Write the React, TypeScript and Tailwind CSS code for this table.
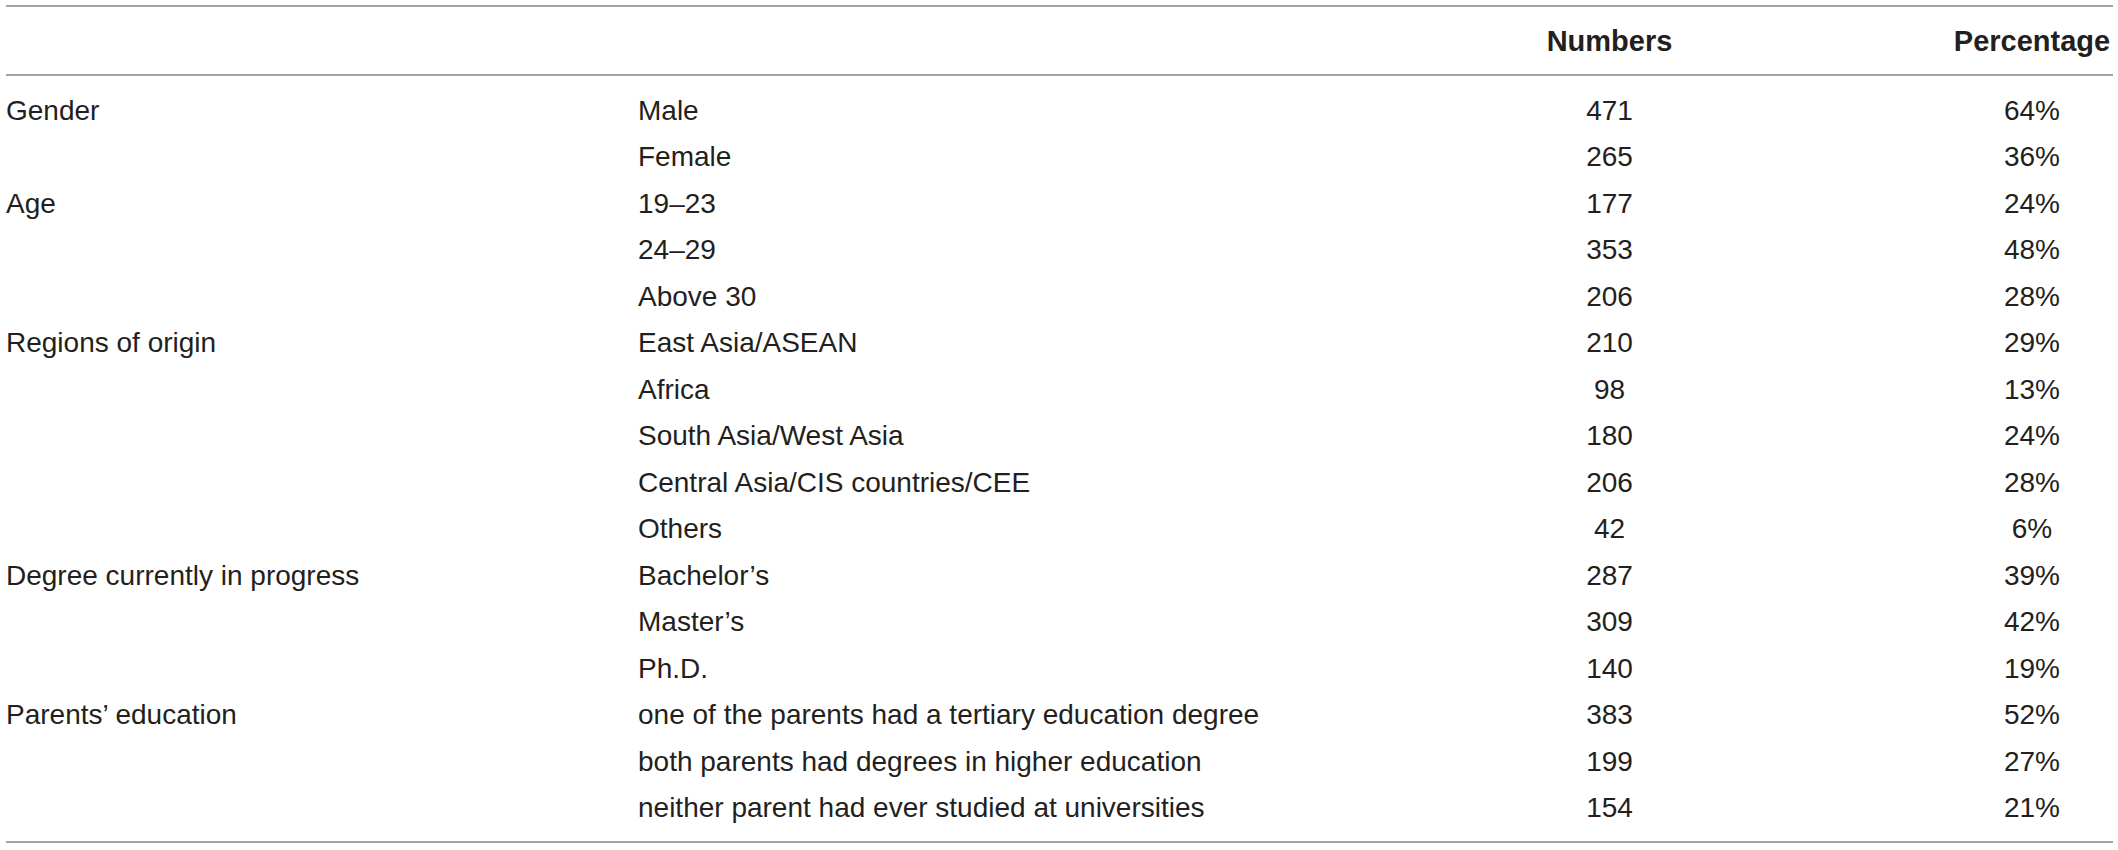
import React from "react";

type Row = { group?: string; label: string; n: string; pct: string };

const rows: Row[] = [
  { group: "Gender", label: "Male", n: "471", pct: "64%" },
  { label: "Female", n: "265", pct: "36%" },
  { group: "Age", label: "19–23", n: "177", pct: "24%" },
  { label: "24–29", n: "353", pct: "48%" },
  { label: "Above 30", n: "206", pct: "28%" },
  { group: "Regions of origin", label: "East Asia/ASEAN", n: "210", pct: "29%" },
  { label: "Africa", n: "98", pct: "13%" },
  { label: "South Asia/West Asia", n: "180", pct: "24%" },
  { label: "Central Asia/CIS countries/CEE", n: "206", pct: "28%" },
  { label: "Others", n: "42", pct: "6%" },
  { group: "Degree currently in progress", label: "Bachelor’s", n: "287", pct: "39%" },
  { label: "Master’s", n: "309", pct: "42%" },
  { label: "Ph.D.", n: "140", pct: "19%" },
  {
    group: "Parents’ education",
    label: "one of the parents had a tertiary education degree",
    n: "383",
    pct: "52%",
  },
  { label: "both parents had degrees in higher education", n: "199", pct: "27%" },
  { label: "neither parent had ever studied at universities", n: "154", pct: "21%" },
];

const cols = "grid grid-cols-[632px_630px_683px_162px]";

export default function App() {
  return (
    <div className="min-h-[850px] bg-white pt-[5px] font-['Liberation_Sans',Arial,sans-serif] text-[#231f20]">
      <div className="ml-[6px] w-[2107px] border-y-2 border-[#a3a3a3]">
        {/* Header */}
        <div className={`${cols} h-[69px] items-center pt-[2px] text-[29px] font-bold border-b-2 border-[#a3a3a3]`}>
          <div />
          <div />
          <div className="text-center">Numbers</div>
          <div className="text-center">Percentage</div>
        </div>

        {/* Body */}
        <div className="pt-[11.5px] pb-[9.5px] text-[28px]">
          {rows.map((r, i) => (
            <div key={i} className={`${cols} h-[46.5px] items-center leading-[46.5px]`}>
              <div>{r.group ?? ""}</div>
              <div className="whitespace-nowrap">{r.label}</div>
              <div className="text-center">{r.n}</div>
              <div className="text-center">{r.pct}</div>
            </div>
          ))}
        </div>
      </div>
    </div>
  );
}
